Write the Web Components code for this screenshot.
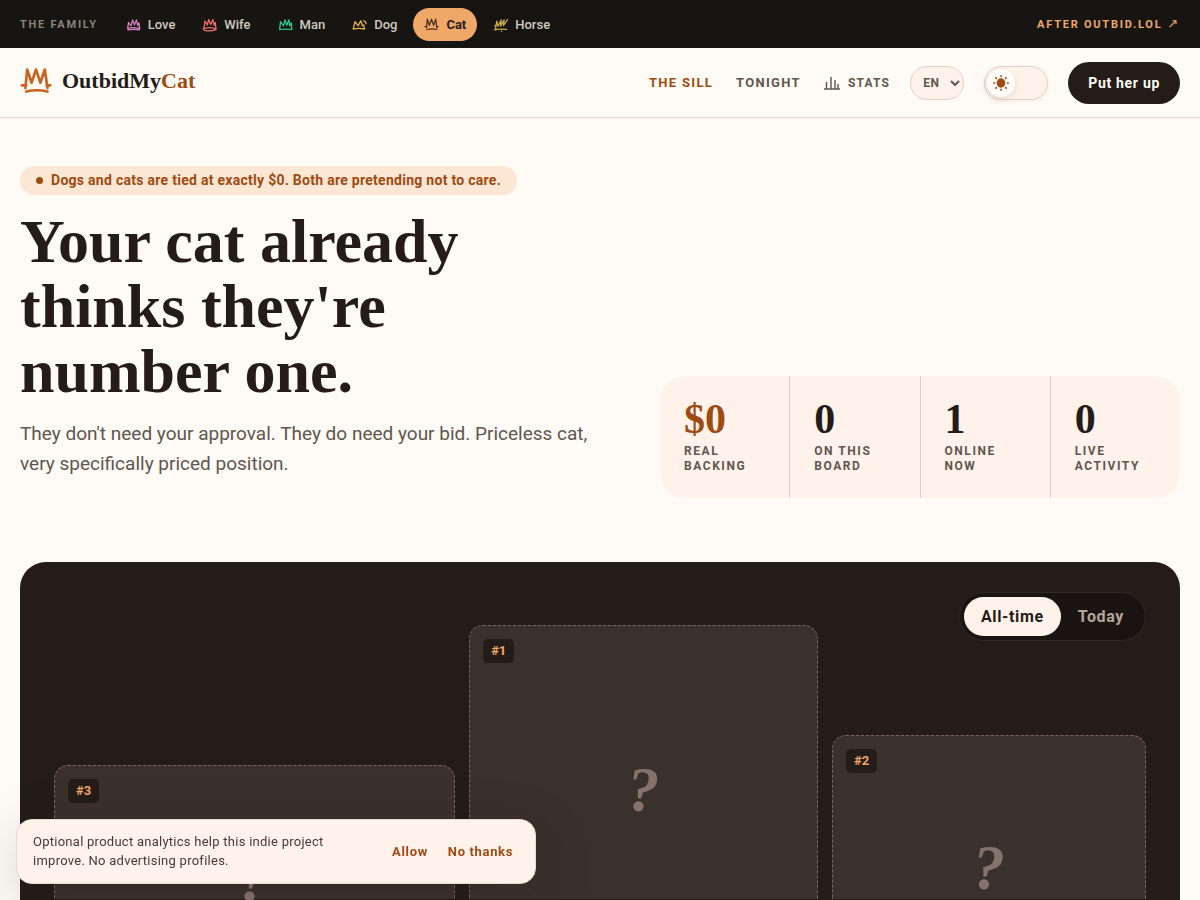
<!DOCTYPE html>
<html lang="en">
<head>
<meta charset="utf-8">
<meta name="viewport" content="width=device-width, initial-scale=1">
<title>OutbidMyCat</title>
<style>
  :root {
    --ink: #241c19; --night: #161512; --paper: #fefaf5; --blush: #fef2ea;
    --rust: #9e4b11; --apricot: #f0a868; --muted: #61564f; --line: #e6dad2;
    --serif: "Liberation Serif", serif;
  }
  body { margin: 0; background: var(--paper); color: var(--ink); font-family: Roboto, "Liberation Sans", sans-serif; font-size: 13px; }
</style>
</head>
<body>
<cat-page></cat-page>
<script>
const define = (name, html, setup) => {
  const template = document.createElement('template');
  template.innerHTML = html;
  customElements.define(name, class extends HTMLElement {
    connectedCallback() {
      if (this.shadowRoot) return;
      this.attachShadow({ mode: 'open' }).append(template.content.cloneNode(true));
      if (setup) setup(this, this.shadowRoot);
    }
  });
};

const crowns = {
  love: 'M4 27 6 12l6 8 4-14 4 12 5-12 3 13 3-6 2 14M4 27c8-3 20-3 29 0l-1 3c-9-2-18-2-27 0z',
  wife: 'M5 24 7 9l6 9 3-13 5 12 5-12 3 14 3-7 1 12M5 24l-2 5 5-3M33 24l1 5-5-2M6 31c8 2 18 2 26-1M8 26c7-2 14-2 21 0',
  man: 'M4 29 6 10l7 10 4-14 4 13 5-13 2 14 4-7 1 16M4 29c9-1 20-1 29 0',
  dog: 'M3 28 7 10l8 10 6-12 4 12 3-2 2 10M3 28c9-2 18-2 27 0M28 8l4 2 2 5',
  cat: 'M6 25 8 4l5 15 5-15 5 15 5-15 3 21M7 29c8-2 16-2 24 0M2 22h5M30 22h4',
  horse: 'M6 27 9 9l3 12 8-15-2 15L27 6l-2 14 10-15M3 30c10-3 19-2 30-1M4 20l4-1M20 33h1'
};
define('crown-mark', `
<style>
  :host { display: block; width: 15px; height: 15px; flex: none; }
  svg { display: block; width: 100%; height: 100%; fill: none; stroke: currentColor; stroke-width: 3; stroke-linecap: round; stroke-linejoin: round; }
</style>
<svg viewBox="0 0 36 34" aria-hidden="true"><path/></svg>`,
  (host, root) => root.querySelector('path').setAttribute('d', crowns[host.getAttribute('kind')] || ''));

define('family-link', `
<style>
  :host { display: block; }
  a { display: flex; align-items: center; gap: 7px; height: 33px; padding: 0 11px; border-radius: 17px; color: #d1c9c0; font-weight: 500; text-decoration: none; }
  :host([current]) a { background: var(--apricot); color: var(--ink); font-weight: 700; }
  .mark { color: var(--tint); }
</style>
<a href="#"><span class="mark"></span><slot></slot></a>`,
  (host, root) => {
    const mark = document.createElement('crown-mark');
    mark.setAttribute('kind', host.getAttribute('kind'));
    root.querySelector('.mark').append(mark);
    if (host.hasAttribute('current')) root.querySelector('a').setAttribute('aria-current', 'page');
  });

define('family-bar', `
<style>
  :host { display: flex; align-items: center; min-height: 48px; padding: 0 20px; background: var(--night); }
  .title { color: #8a827a; font-size: 11px; font-weight: 700; letter-spacing: .16em; margin-right: 17px; }
  nav { display: flex; gap: 5px; }
  .after { display: flex; align-items: center; gap: 5px; margin-left: auto; color: var(--apricot); font-size: 11px; font-weight: 700; letter-spacing: .16em; text-decoration: none; }
  .after span { font: 13px/16px "DejaVu Sans", sans-serif; }
</style>
<span class="title">THE FAMILY</span>
<nav aria-label="The family">
  <family-link kind="love" style="--tint:#d583c5">Love</family-link>
  <family-link kind="wife" style="--tint:#f26d70">Wife</family-link>
  <family-link kind="man" style="--tint:#35c994">Man</family-link>
  <family-link kind="dog" style="--tint:#e9b43c">Dog</family-link>
  <family-link kind="cat" style="--tint:#4d2d18" current>Cat</family-link>
  <family-link kind="horse" style="--tint:#d0ab4a">Horse</family-link>
</nav>
<a class="after" href="#">AFTER OUTBID.LOL <span>↗</span></a>`);

define('theme-switch', `
<style>
  :host { display: block; }
  label { display: flex; position: relative; width: 64px; height: 34px; box-sizing: border-box; padding: 2px; align-items: center; border: 1px solid #e4cfc3; border-radius: 17px; background: var(--blush); box-shadow: 0 2px 6px #241c190c; }
  input { position: absolute; inset: 0; margin: 0; width: 100%; height: 100%; opacity: 0; }
  span { display: grid; place-items: center; width: 28px; height: 28px; border-radius: 50%; background: #fffdfa; box-shadow: 0 2px 6px #241c191c; }
  svg { width: 16px; height: 16px; color: var(--rust); }
  input:checked + span { margin-left: 30px; }
</style>
<label><input type="checkbox" role="switch" aria-label="Dark theme"><span>
<svg viewBox="0 0 16 16" aria-hidden="true"><ellipse cx="8" cy="8" rx="4.3" ry="4.7" fill="currentColor"/><path d="M8 .8v.8M8 14.4v.8M.8 8h.8M14.4 8h.8M2.9 2.9l.5.5M12.6 12.6l.5.5M2.9 13.1l.5-.5M12.6 3.4l.5-.5" stroke="currentColor" stroke-width="1.6" stroke-linecap="round"/></svg></span></label>`);

define('site-header', `
<style>
  :host { display: flex; align-items: center; gap: 20px; min-height: 69px; padding: 0 20px; border-bottom: 1px solid var(--line); }
  .brand { display: flex; align-items: center; gap: 10px; margin: 0 auto 4px 0; color: var(--ink); text-decoration: none; font: bold 22px/32px var(--serif); }
  .brand crown-mark { width: 32px; height: 30px; color: #c9641f; }
  .brand b { color: var(--rust); }
  nav { display: flex; align-items: center; gap: 23px; }
  nav a { display: flex; align-items: center; gap: 8px; color: var(--muted); font-weight: 700; letter-spacing: .1em; text-decoration: none; }
  nav a[aria-current] { color: var(--rust); }
  nav .stats { font-size: 12px; }
  nav svg { width: 16px; height: 14px; fill: none; stroke: currentColor; stroke-width: 1.4; }
  .lang { display: flex; position: relative; align-items: center; }
  select { appearance: none; width: 54px; height: 34px; padding: 0 12px; border: 1px solid #e4cfc3; border-radius: 17px; background: var(--blush); color: var(--muted); font: 700 12px Roboto, sans-serif; letter-spacing: .04em; }
  .lang svg { position: absolute; right: 4px; width: 10px; height: 6px; fill: none; stroke: var(--muted); stroke-width: 2; pointer-events: none; }
  button { height: 42px; padding: 0 20px; border: 0; border-radius: 21px; background: var(--ink); color: #fffaf5; font: 700 14px Roboto, sans-serif; letter-spacing: .05em; }
</style>
<a class="brand" href="#"><crown-mark kind="cat"></crown-mark><span>OutbidMy<b>Cat</b></span></a>
<nav aria-label="Main">
  <a href="#" aria-current="page">THE SILL</a>
  <a href="#">TONIGHT</a>
  <a class="stats" href="#"><svg viewBox="0 0 16 14" aria-hidden="true"><path d="M0 13h16M2.5 13V6M7 13V1M11 13V4M14 13V8"/></svg>STATS</a>
</nav>
<span class="lang"><select aria-label="Language"><option>EN</option></select><svg viewBox="0 0 10 6" aria-hidden="true"><path d="m1 1 4 4 4-4"/></svg></span>
<theme-switch></theme-switch>
<button type="button">Put her up</button>`);

define('stat-cell', `
<style>
  :host { display: block; padding: 24px; background: var(--blush); }
  strong { display: block; color: var(--value, var(--ink)); font: bold 42px/38px var(--serif); margin-bottom: 6px; }
  span { display: block; color: var(--muted); font-size: 12px; font-weight: 700; line-height: 15px; letter-spacing: .13em; text-transform: uppercase; }
</style>
<strong><slot name="value"></slot></strong><span><slot></slot></span>`);

define('cat-hero', `
<style>
  :host { display: grid; grid-template-columns: 600fr 520fr; column-gap: 40px; align-items: end; padding: 48px 20px 64px; }
  .note { display: inline-flex; align-items: center; gap: 8px; padding: 0 16px; border-radius: 15px; background: #fce6d4; color: var(--rust); font-size: 14px; font-weight: 700; line-height: 29px; letter-spacing: .02em; }
  .note i { width: 7px; height: 7px; border-radius: 50%; background: currentColor; }
  h1 { margin: 14px 0 15px; max-width: 460px; font: bold 62px/65px var(--serif); }
  p { margin: 0 0 19px; max-width: 580px; color: var(--muted); font-size: 19px; line-height: 30px; }
  .stats { display: grid; grid-template-columns: repeat(4, 1fr); gap: 1px; overflow: hidden; border-radius: 26px; background: linear-gradient(#dccfc7, #dccfc7) center / 50% 100% no-repeat var(--blush); background-size: 60% 100%; }
</style>
<div>
  <div class="note"><i></i>Dogs and cats are tied at exactly $0. Both are pretending not to care.</div>
  <h1>Your cat already thinks they're number one.</h1>
  <p>They don't need your approval. They do need your bid. Priceless cat, very specifically priced position.</p>
</div>
<div class="stats">
  <stat-cell style="--value:var(--rust)"><span slot="value">$0</span>Real<br>backing</stat-cell>
  <stat-cell><span slot="value">0</span>On this<br>board</stat-cell>
  <stat-cell><span slot="value">1</span>Online<br>now</stat-cell>
  <stat-cell><span slot="value">0</span>Live<br>activity</stat-cell>
</div>`);

define('podium-slot', `
<style>
  :host { display: flex; flex-direction: column; align-items: flex-start; box-sizing: border-box; height: var(--rise); padding: 13px; border: 1px dashed #75675f; border-bottom: 0; border-radius: 14px 14px 0 0; background: #3a302c; }
  .rank { padding: 0 8px; border-radius: 5px; background: var(--ink); color: var(--apricot); font-weight: 700; line-height: 24px; }
  .who { align-self: center; margin-top: var(--drop); color: #85736b; font: italic bold 64px/66px var(--serif); }
</style>
<span class="rank"><slot></slot></span><span class="who">?</span>`);

define('cat-board', `
<style>
  :host { display: block; margin: 0 20px 40px; padding: 30px 34px 34px; border-radius: 26px; background: var(--ink); }
  .range { display: flex; width: max-content; margin-left: auto; padding: 4px; border: 1px solid #332a26; border-radius: 25px; background: #191411; }
  button { height: 39px; padding: 0 17px; border: 0; border-radius: 20px; background: none; color: #b5a59b; font: 700 16px Roboto, sans-serif; letter-spacing: .04em; }
  button[aria-pressed="true"] { background: var(--blush); color: var(--ink); }
  .podium { display: grid; grid-template-columns: 115fr 100fr 90fr; column-gap: 14px; align-items: end; margin-top: -16px; }
</style>
<div class="range" role="group" aria-label="Period"><button type="button" aria-pressed="true">All-time</button><button type="button" aria-pressed="false">Today</button></div>
<div class="podium">
  <podium-slot style="--rise:134px;--drop:44px">#3</podium-slot>
  <podium-slot style="--rise:274px;--drop:94px">#1</podium-slot>
  <podium-slot style="--rise:164px;--drop:62px">#2</podium-slot>
</div>`);

define('consent-bar', `
<style>
  :host { position: fixed; z-index: 5; left: 16px; bottom: 16px; display: flex; align-items: center; justify-content: space-between; box-sizing: border-box; width: 520px; max-width: calc(100% - 32px); padding: 12px 12px 13px 16px; border: 1px solid var(--line); border-radius: 16px; background: var(--blush); box-shadow: 0 16px 60px #241c192e; }
  p { margin: 0; max-width: 310px; color: #463a34; line-height: 19px; letter-spacing: .02em; }
  div { display: flex; }
  button { padding: 8px 10px; border: 0; background: none; color: var(--rust); font: 700 13px Roboto, sans-serif; letter-spacing: .05em; }
</style>
<p>Optional product analytics help this indie project improve. No advertising profiles.</p>
<div><button type="button">Allow</button><button type="button">No thanks</button></div>`);

define('cat-page', `
<style>:host { display: block; }</style>
<family-bar></family-bar>
<site-header></site-header>
<main><cat-hero></cat-hero><cat-board></cat-board></main>
<consent-bar></consent-bar>`);
</script>
</body>
</html>
